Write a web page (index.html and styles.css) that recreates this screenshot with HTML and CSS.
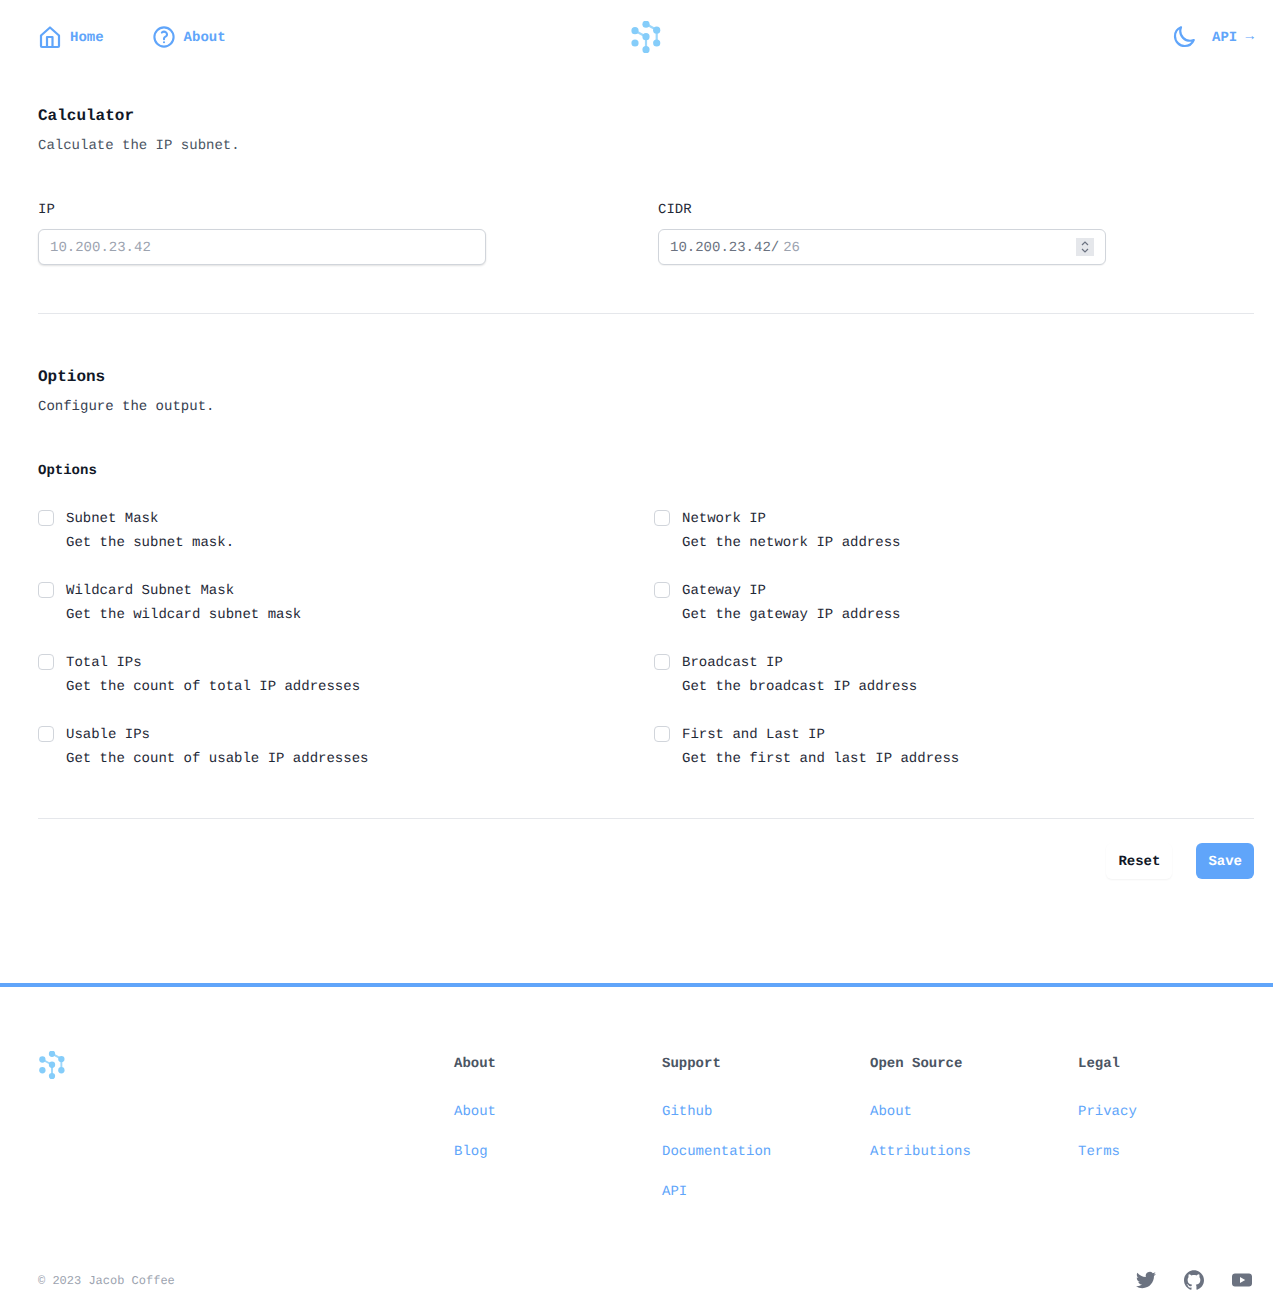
FILE: index.html
```html
<!DOCTYPE html>
<html lang="en">
<head>
<meta charset="utf-8">
<title>Calculator</title>
<link rel="stylesheet" href="styles.css">
</head>
<body>
<svg class="defs" width="0" height="0" aria-hidden="true">
  <symbol id="logo" viewBox="0 0 32 32">
    <g fill="none" stroke="currentColor" stroke-width="2.2" stroke-opacity=".8">
      <path d="M16 3 26.7 9V22"/>
      <path d="M5 9.700 16 15.700V28.700"/>
    </g>
    <g fill="currentColor">
      <circle cx="16" cy="3.200" r="3.600"/>
      <circle cx="26.700" cy="9.200" r="3.600"/>
      <circle cx="5" cy="9.700" r="3.600"/>
      <circle cx="16" cy="15.700" r="3.600"/>
      <circle cx="5" cy="22" r="3.600"/>
      <circle cx="26.700" cy="22" r="3.600"/>
      <circle cx="16" cy="28.700" r="3.600"/>
    </g>
  </symbol>
</svg>

<header class="nav">
  <div class="nav-side">
    <a class="nav-link" href="#">
      <svg class="icon" viewBox="0 0 24 24" fill="none" stroke="currentColor" stroke-width="2.200" stroke-linejoin="round"><path d="M3 10.500 12 2.500l9 8V21a1 1 0 0 1-1 1H4a1 1 0 0 1-1-1Z"/><path d="M9 22V12h5.500v10"/></svg>
      <span class="nav-text">Home</span>
    </a>
    <a class="nav-link nav-link-about" href="#">
      <svg class="icon" viewBox="0 0 24 24" fill="none" stroke="currentColor" stroke-width="2.100" stroke-linecap="round" stroke-linejoin="round"><path d="M9.879 7.519c1.171-1.025 3.071-1.025 4.242 0 1.172 1.025 1.172 2.687 0 3.712-.203.179-.43.326-.67.442-.745.361-1.450.999-1.450 1.827v.75"/><circle cx="12" cy="12" r="9.600"/><path d="M12 17.250h.008v.008H12z"/></svg>
      <span class="nav-text">About</span>
    </a>
  </div>
  <svg class="logo-nav"><use href="#logo"/></svg>
  <div class="nav-side nav-right">
    <svg class="icon" viewBox="0 0 24 24" fill="none" stroke="currentColor" stroke-width="2.200" stroke-linecap="round" stroke-linejoin="round"><path d="M21.752 15.002A9.718 9.718 0 0118 15.750c-5.385 0-9.750-4.365-9.750-9.750 0-1.330.266-2.597.748-3.752A9.753 9.753 0 003 11.250C3 16.635 7.365 21 12.750 21a9.753 9.753 0 009.002-5.998z"/></svg>
    <a class="nav-link" href="#"><span class="nav-text">API <span class="arrow">→</span></span></a>
  </div>
</header>

<main class="main">
  <section class="section-calc">
    <h2 class="title">Calculator</h2>
    <p class="desc">Calculate the IP subnet.</p>
    <div class="fields">
      <div class="field">
        <label class="field-label" for="ip">IP</label>
        <input class="input input-ip" id="ip" type="text" placeholder="10.200.23.42">
      </div>
      <div class="field">
        <label class="field-label" for="cidr">CIDR</label>
        <div class="input input-cidr">
          <span class="prefix">10.200.23.42/</span>
          <input class="cidr-value" id="cidr" type="text" placeholder="26">
          <span class="stepper">
            <svg width="10" height="14" viewBox="0 0 10 14" fill="none" stroke="#6b7280" stroke-width="1.200"><path d="M2 5 5 2l3 3"/><path d="M2 9l3 3 3-3"/></svg>
          </span>
        </div>
      </div>
    </div>
  </section>

  <section class="section-options">
    <h2 class="title">Options</h2>
    <p class="desc desc-dark">Configure the output.</p>
    <h3 class="subtitle">Options</h3>
    <div class="options">
      <label class="option"><input type="checkbox" class="check"><span class="option-text"><span>Subnet Mask</span><span>Get the subnet mask.</span></span></label>
      <label class="option"><input type="checkbox" class="check"><span class="option-text"><span>Network IP</span><span>Get the network IP address</span></span></label>
      <label class="option"><input type="checkbox" class="check"><span class="option-text"><span>Wildcard Subnet Mask</span><span>Get the wildcard subnet mask</span></span></label>
      <label class="option"><input type="checkbox" class="check"><span class="option-text"><span>Gateway IP</span><span>Get the gateway IP address</span></span></label>
      <label class="option"><input type="checkbox" class="check"><span class="option-text"><span>Total IPs</span><span>Get the count of total IP addresses</span></span></label>
      <label class="option"><input type="checkbox" class="check"><span class="option-text"><span>Broadcast IP</span><span>Get the broadcast IP address</span></span></label>
      <label class="option"><input type="checkbox" class="check"><span class="option-text"><span>Usable IPs</span><span>Get the count of usable IP addresses</span></span></label>
      <label class="option"><input type="checkbox" class="check"><span class="option-text"><span>First and Last IP</span><span>Get the first and last IP address</span></span></label>
    </div>
  </section>

  <div class="actions">
    <button class="btn btn-reset" type="button">Reset</button>
    <button class="btn btn-save" type="button">Save</button>
  </div>
</main>

<footer class="footer">
  <div class="footer-grid">
    <svg class="logo-footer"><use href="#logo"/></svg>
    <div class="footer-col">
      <h4>About</h4>
      <a href="#">About</a>
      <a href="#">Blog</a>
    </div>
    <div class="footer-col">
      <h4>Support</h4>
      <a href="#">Github</a>
      <a href="#">Documentation</a>
      <a href="#">API</a>
    </div>
    <div class="footer-col">
      <h4>Open Source</h4>
      <a href="#">About</a>
      <a href="#">Attributions</a>
    </div>
    <div class="footer-col">
      <h4>Legal</h4>
      <a href="#">Privacy</a>
      <a href="#">Terms</a>
    </div>
  </div>
  <div class="footer-bottom">
    <small class="copyright">© 2023 Jacob Coffee</small>
    <div class="socials">
      <svg class="social" viewBox="0 0 24 24" fill="currentColor"><path transform="translate(2 2) scale(.8333)" d="M23.953 4.57a10 10 0 01-2.825.775 4.958 4.958 0 002.163-2.723c-.951.555-2.005.959-3.127 1.184a4.92 4.92 0 00-8.384 4.482C7.69 8.095 4.067 6.13 1.64 3.162a4.822 4.822 0 00-.666 2.475c0 1.71.87 3.213 2.188 4.096a4.904 4.904 0 01-2.228-.616v.06a4.923 4.923 0 003.946 4.827 4.996 4.996 0 01-2.212.085 4.936 4.936 0 004.604 3.417 9.867 9.867 0 01-6.102 2.105c-.39 0-.779-.023-1.17-.067a13.995 13.995 0 007.557 2.209c9.053 0 13.998-7.496 13.998-13.985 0-.21 0-.42-.015-.63A9.935 9.935 0 0024 4.59z"/></svg>
      <svg class="social" viewBox="0 0 24 24" fill="currentColor"><path transform="translate(2 2) scale(.8333)" d="M12 .297c-6.63 0-12 5.373-12 12 0 5.303 3.438 9.8 8.205 11.385.6.113.82-.258.82-.577 0-.285-.01-1.04-.015-2.04-3.338.724-4.042-1.61-4.042-1.61C4.422 18.07 3.633 17.7 3.633 17.7c-1.087-.744.084-.729.084-.729 1.205.084 1.838 1.236 1.838 1.236 1.07 1.835 2.809 1.305 3.495.998.108-.776.417-1.305.76-1.605-2.665-.3-5.466-1.332-5.466-5.93 0-1.31.465-2.38 1.235-3.22-.135-.303-.54-1.523.105-3.176 0 0 1.005-.322 3.3 1.23.96-.267 1.98-.399 3-.405 1.02.006 2.04.138 3 .405 2.28-1.552 3.285-1.23 3.285-1.23.645 1.653.24 2.873.12 3.176.765.84 1.23 1.91 1.23 3.22 0 4.61-2.805 5.625-5.475 5.92.42.36.81 1.096.81 2.22 0 1.606-.015 2.896-.015 3.286 0 .315.21.69.825.57C20.565 22.092 24 17.592 24 12.297c0-6.627-5.373-12-12-12"/></svg>
      <svg class="social" viewBox="0 0 24 24" fill="currentColor"><path fill-rule="evenodd" d="M5 5.600h14c1.700 0 3 1.300 3 3v6.800c0 1.700-1.300 3-3 3H5c-1.700 0-3-1.300-3-3V8.600c0-1.700 1.300-3 3-3ZM10 9v6l5.200-3Z"/></svg>
    </div>
  </div>
</footer>
</body>
</html>
```

FILE: styles.css
```css
* { box-sizing: border-box; }

html, body { margin: 0; padding: 0; }

body {
  background: #fff;
  color: #111827;
  font-family: "Liberation Mono", "Courier New", monospace;
  font-size: 14px;
  line-height: 22px;
  text-rendering: geometricPrecision;
}

.defs { position: absolute; }

h2, h3, h4, p { margin: 0; }

a { text-decoration: none; }

.nav {
  display: grid;
  grid-template-columns: 1fr auto 1fr;
  align-items: center;
  height: 74px;
  padding: 0 19px 0 38px;
  color: #60a5fa;
}

.nav-side { display: flex; align-items: center; }

.nav-right { justify-content: flex-end; gap: 16px; }

.nav-link {
  display: flex;
  align-items: center;
  gap: 8px;
  color: #60a5fa;
  font-weight: 700;
}

.nav-text { padding-top: 2px; }

.nav-link-about { margin-left: 48px; }

.arrow { font-weight: 400; line-height: 0; vertical-align: 1px; }

.icon { display: block; width: 24px; height: 24px; flex: none; }

.logo-nav { display: block; width: 32px; height: 32px; color: #85cdfa; filter: blur(.4px); }

.main { padding: 29px 19px 0 38px; }

.section-calc {
  padding-bottom: 48px;
  border-bottom: 1px solid #e5e7eb;
}

.title {
  font-size: 16px;
  line-height: 26px;
  font-weight: 700;
  color: #111827;
}

.desc { margin-top: 6px; color: #4b5563; }

.desc-dark { color: #374151; }

.fields {
  display: grid;
  grid-template-columns: 1fr 1fr;
  column-gap: 24px;
  margin-top: 42px;
}

.field-label { display: block; margin-bottom: 8px; color: #1f2937; }

.input {
  display: flex;
  align-items: center;
  width: 448px;
  height: 36px;
  padding: 2px 11px 0;
  background: #fff;
  border: 1px solid #d1d5db;
  border-radius: 6px;
  font: inherit;
  text-rendering: inherit;
  color: #6b7280;
}

.input-ip { box-shadow: 0 1px 2px rgba(0, 0, 0, .12); outline: none; }

.input-cidr { box-shadow: 0 1px 1px rgba(0, 0, 0, .05); }

.input::placeholder, .cidr-value::placeholder { color: #9ca3af; opacity: 1; }

.prefix { color: #6b7280; }

.cidr-value {
  flex: 1;
  min-width: 0;
  margin-left: 4px;
  padding: 0;
  border: 0;
  outline: none;
  background: none;
  font: inherit;
  text-rendering: inherit;
}

.stepper {
  display: flex;
  align-items: center;
  justify-content: center;
  width: 18px;
  height: 18px;
  margin-top: -2px;
  background: #e5e7eb;
}

.section-options {
  padding: 50px 0 48px;
  border-bottom: 1px solid #e5e7eb;
}

.subtitle {
  margin-top: 42px;
  font-size: 14px;
  line-height: 22px;
  font-weight: 700;
  color: #111827;
}

.options {
  display: grid;
  grid-template-columns: 600px 600px;
  column-gap: 16px;
  row-gap: 26px;
  margin-top: 26px;
}

.option { display: flex; gap: 12px; color: #1f2937; }

.check {
  appearance: none;
  flex: none;
  width: 16px;
  height: 16px;
  margin: 2px 0 0;
  background: #fff;
  border: 1px solid #d1d5db;
  border-radius: 4px;
}

.option-text { display: flex; flex-direction: column; gap: 2px; }

.actions {
  display: flex;
  justify-content: flex-end;
  gap: 24px;
  margin-top: 24px;
}

.btn {
  height: 36px;
  padding: 1px 12px 0;
  border: 0;
  border-radius: 6px;
  font: inherit;
  font-weight: 700;
  text-rendering: inherit;
}

.btn-reset {
  background: #fff;
  color: #111827;
  box-shadow: 0 1px 2px rgba(0, 0, 0, .05);
}

.btn-save { background: #60a5fa; color: #fff; }

.footer {
  margin-top: 104px;
  padding: 64px 19px 24px 38px;
  border-top: 4px solid #60a5fa;
}

.footer-grid {
  display: grid;
  grid-template-columns: 384px repeat(4, 1fr);
  column-gap: 32px;
}

.logo-footer { display: block; width: 28px; height: 28px; color: #85cdfa; filter: blur(.4px); }

.footer-col { display: flex; flex-direction: column; align-items: flex-start; }

.footer-col h4 {
  margin-bottom: 24px;
  font-size: 14px;
  line-height: 26px;
  font-weight: 700;
  color: #4b5563;
}

.footer-col a { margin-bottom: 18px; color: #60a5fa; }

.footer-col a:last-child { margin-bottom: 0; }

.footer-bottom {
  display: flex;
  align-items: center;
  justify-content: space-between;
  margin-top: 65px;
}

.copyright { padding-top: 2px; font-size: 12px; line-height: 16px; color: #9ca3af; }

.socials { display: flex; gap: 24px; color: #6b7280; }

.social { display: block; width: 24px; height: 24px; }
```
